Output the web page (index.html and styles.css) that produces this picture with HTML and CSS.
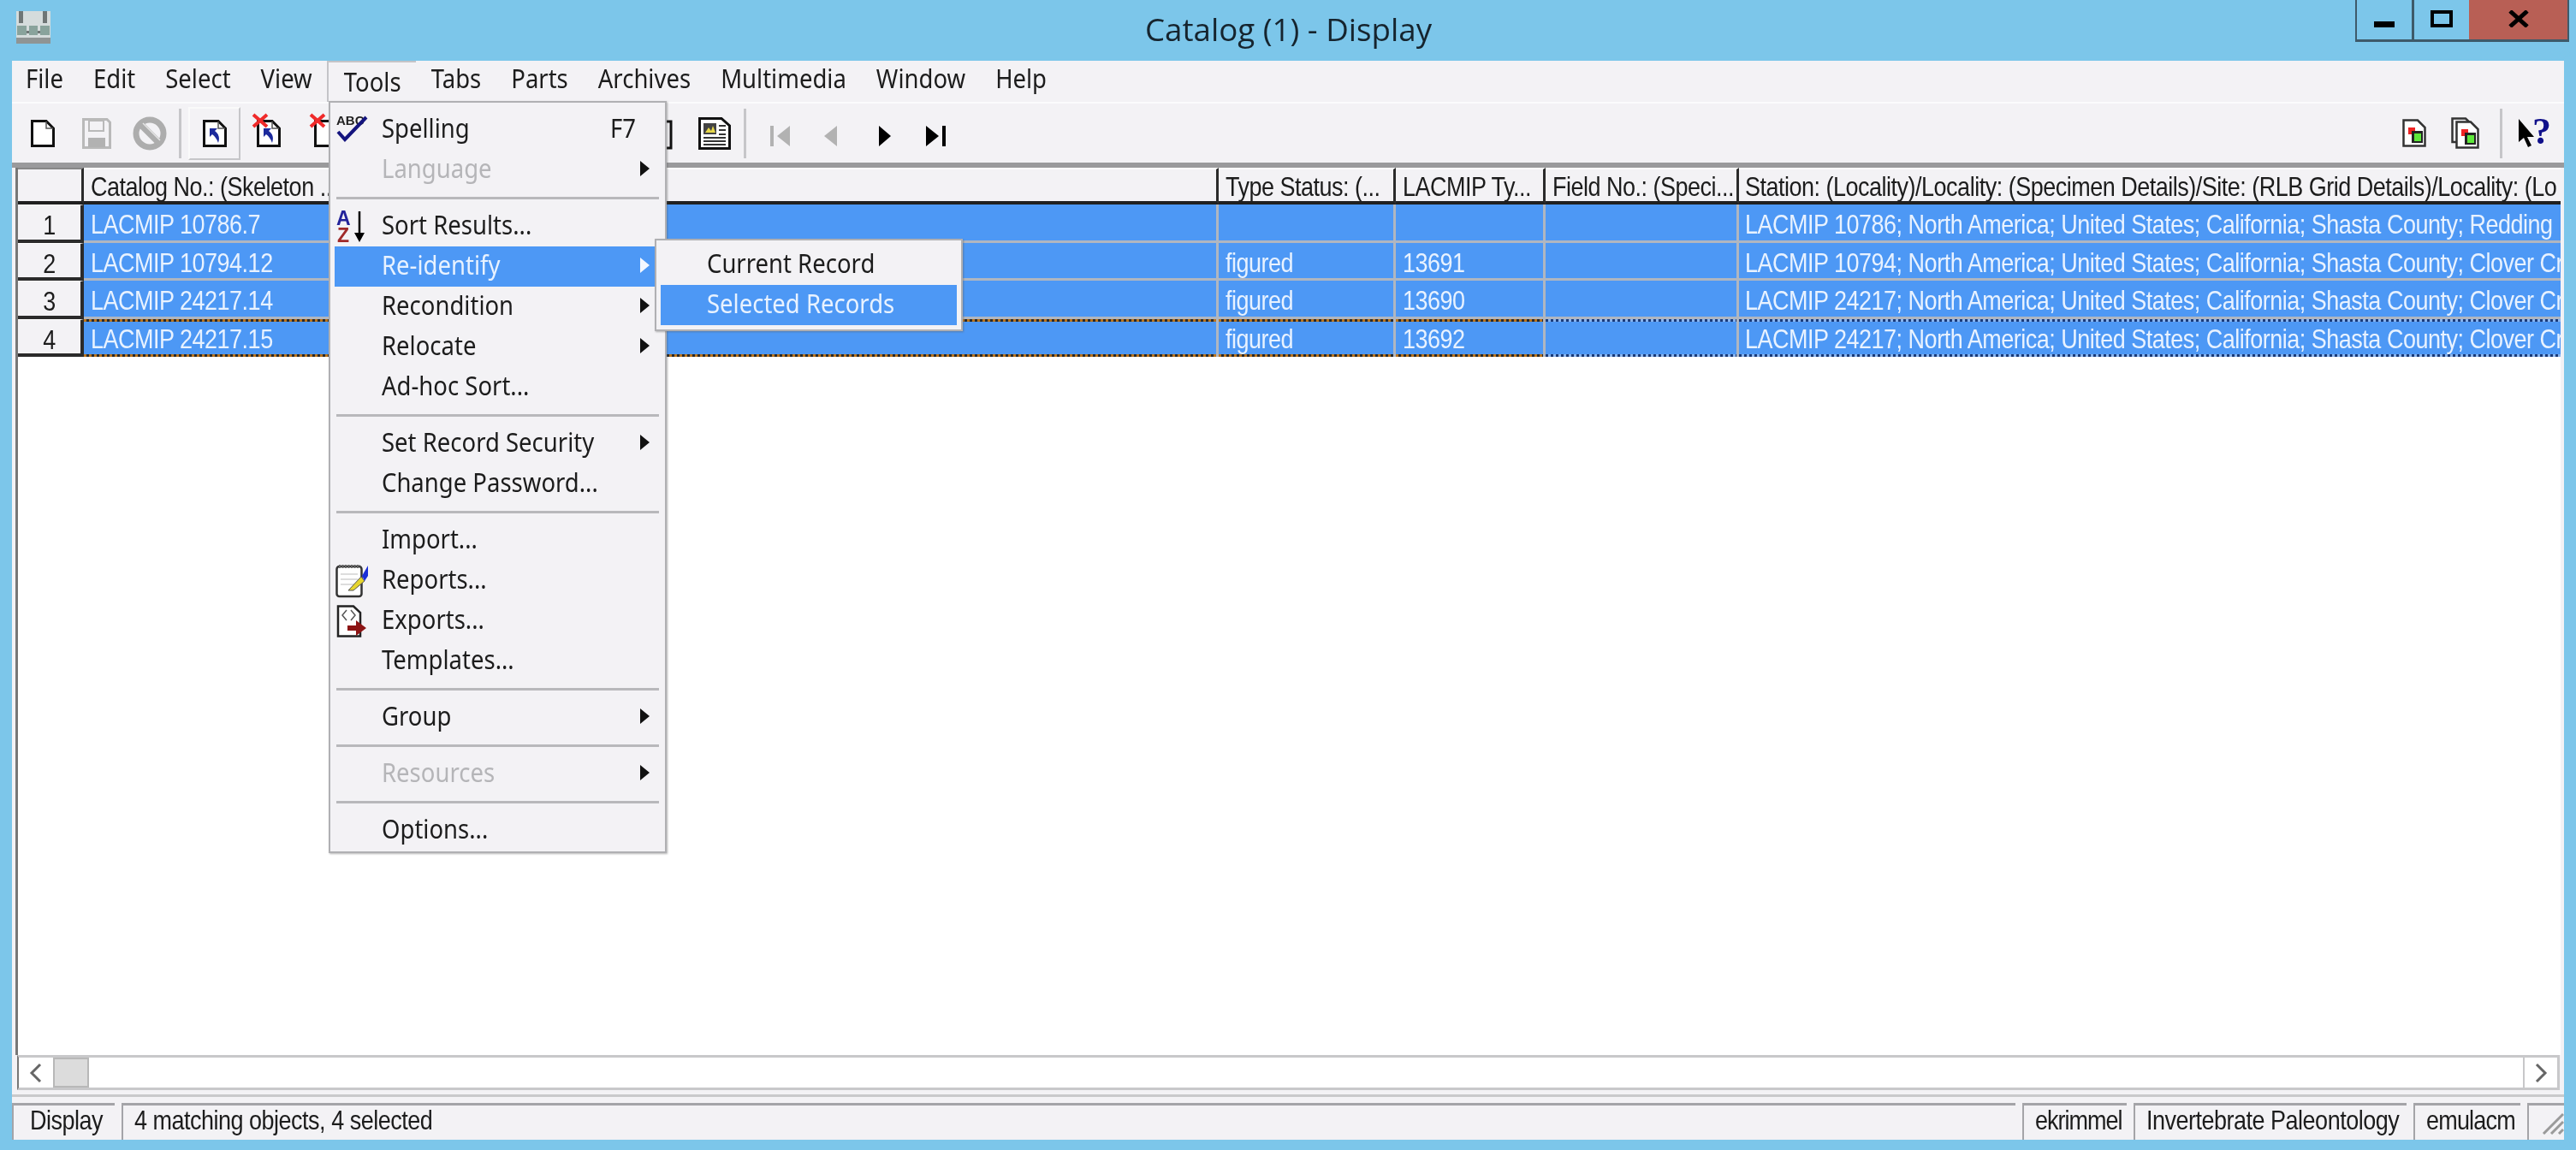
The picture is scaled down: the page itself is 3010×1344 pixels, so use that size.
FILE: index.html
```html
<!DOCTYPE html>
<html lang="en">
<head>
<meta charset="utf-8">
<title>Catalog (1) - Display</title>
<link rel="stylesheet" href="styles.css">
</head>
<body>
<svg class="defs" width="0" height="0">
  <symbol id="doc" viewBox="0 0 28 32"><path d="M1.5 1.5H18L26.5 10V30.500H1.500Z" fill="#fff" stroke="#111" stroke-width="3"/><path d="M18 2V10H26" fill="none" stroke="#555" stroke-width="1.500"/></symbol>
  <symbol id="back" viewBox="0 0 28 32"><path d="M8 10H17L14 13C19 17 20 21 18 27C16 22 14 19 11 17L8 20Z" fill="#1c2a9c"/></symbol>
  <symbol id="cross" viewBox="0 0 20 18"><path d="M2 2L18 16M18 2L2 16" stroke="#f02a2a" stroke-width="4"/></symbol>
  <symbol id="rdoc" viewBox="0 0 28 33"><path d="M1.5 1.500H18L26.500 10V31.500H1.500Z" fill="#fff" stroke="#333" stroke-width="2.500"/><rect x="7" y="10" width="8" height="8" fill="#e22"/><rect x="11" y="14" width="13" height="14" fill="#222"/><rect x="14" y="17" width="8" height="9" fill="#5ee83a"/></symbol>
</svg>
<div class="app">
  <header class="titlebar">
    <div class="tb-left">
      <svg class="app-icon" width="40" height="38" viewBox="0 0 40 38"><rect width="40" height="38" fill="#d5dcdc"/><path d="M3 0H8V14H3ZM31 0H36V14H31Z" fill="#6f7676"/><rect x="8" y="23" width="24" height="3" fill="#6f7676"/><path d="M1 17H12V28H1ZM15 17H25V28H15ZM28 17H39V28H28Z" fill="#89a39c"/><rect y="31" width="40" height="7" fill="#8f9494"/></svg>
    </div>
    <div class="title"><span class="tx">Catalog (1) - Display</span></div>
    <div class="win-btns">
      <div class="wb wb-min"><svg width="24" height="8" viewBox="0 0 24 8"><rect width="24" height="7" fill="#000"/></svg></div>
      <div class="wb wb-max"><svg width="26" height="20" viewBox="0 0 26 20"><rect x="2" y="2" width="22" height="16" fill="none" stroke="#000" stroke-width="4"/></svg></div>
      <div class="wb wb-close"><svg width="24" height="20" viewBox="0 0 24 20"><path d="M2 1L22 19M22 1L2 19" stroke="#000" stroke-width="5"/></svg></div>
    </div>
  </header>

  <main class="client">
    <nav class="menubar">
      <div class="mb-item"><span class="tx">File</span></div>
      <div class="mb-item"><span class="tx">Edit</span></div>
      <div class="mb-item"><span class="tx">Select</span></div>
      <div class="mb-item"><span class="tx">View</span></div>
      <div class="mb-item mb-open"><span class="tx">Tools</span></div>
      <div class="mb-item"><span class="tx">Tabs</span></div>
      <div class="mb-item"><span class="tx">Parts</span></div>
      <div class="mb-item"><span class="tx">Archives</span></div>
      <div class="mb-item"><span class="tx">Multimedia</span></div>
      <div class="mb-item"><span class="tx">Window</span></div>
      <div class="mb-item"><span class="tx">Help</span></div>
    </nav>

    <div class="toolbar">
      <svg class="ti ti-new" width="28" height="32"><use href="#doc"/></svg>
      <svg class="ti ti-save" width="34" height="36" viewBox="0 0 34 36"><path d="M1.500 1.500H29L32.500 5V34.500H1.500Z" fill="#f3f2f5" stroke="#b9b9b9" stroke-width="3"/><rect x="8" y="3" width="17" height="12" fill="none" stroke="#b9b9b9" stroke-width="2"/><rect x="7" y="23" width="20" height="11" fill="#b2b2b2"/></svg>
      <svg class="ti ti-stop" width="40" height="40" viewBox="0 0 40 40"><circle cx="20" cy="20" r="16" fill="none" stroke="#adadad" stroke-width="7"/><path d="M9 9L31 31" stroke="#adadad" stroke-width="8"/><path d="M12 8L32 28" stroke="#e8e8e8" stroke-width="1.500"/></svg>
      <div class="ti-sep"></div>
      <div class="ti-raised">
        <svg class="ti-stack" width="28" height="32"><use href="#doc"/><use href="#back"/></svg>
      </div>
      <div class="ti-x ti-x1">
        <svg width="28" height="32"><use href="#doc"/><use href="#back"/></svg>
        <svg class="ti-cross" width="20" height="18"><use href="#cross"/></svg>
      </div>
      <div class="ti-x ti-x2">
        <svg width="28" height="32"><use href="#doc"/></svg>
        <svg class="ti-cross" width="20" height="18"><use href="#cross"/></svg>
      </div>
      <svg class="ti ti-clip" width="26" height="38" viewBox="0 0 26 38"><rect x="2" y="5" width="22" height="31" fill="#f3f2f5" stroke="#111" stroke-width="3"/><rect x="8" y="1" width="10" height="7" fill="#555"/></svg>
      <svg class="ti ti-news" width="38" height="38" viewBox="0 0 38 38"><path d="M1.500 1.500H27L36.500 10V36.500H1.500Z" fill="#fff" stroke="#111" stroke-width="3"/><rect x="6" y="7" width="15" height="13" fill="#444"/><path d="M8 18L12 12L15 16L17 10L20 18Z" fill="#e8d84a"/><path d="M24 10H32M24 15H32M24 20H32M6 24H32M6 28H32M6 32H32" stroke="#333" stroke-width="2"/></svg>
      <div class="ti-sep ti-sep2"></div>
      <svg class="ti ti-nav ti-first" width="23" height="24" viewBox="0 0 23 24"><rect width="4" height="24" fill="#b2b2b2"/><path d="M23 0V24L8 12Z" fill="#b2b2b2"/></svg>
      <svg class="ti ti-nav ti-prev" width="15" height="24" viewBox="0 0 15 24"><path d="M15 0V24L0 12Z" fill="#b2b2b2"/></svg>
      <svg class="ti ti-nav ti-next" width="14" height="24" viewBox="0 0 14 24"><path d="M0 0V24L14 12Z" fill="#000"/></svg>
      <svg class="ti ti-nav ti-last" width="23" height="24" viewBox="0 0 23 24"><path d="M0 0V24L15 12Z" fill="#000"/><rect x="19" width="4" height="24" fill="#000"/></svg>
      <div class="tb-spacer"></div>
      <svg class="ti" width="28" height="33"><use href="#rdoc"/></svg>
      <svg class="ti ti-rd2" width="33" height="38" viewBox="0 0 33 38"><path d="M1.500 1.500H17L24 8V29H1.500Z" fill="#f3f2f5" stroke="#333" stroke-width="2.500"/><svg x="5" y="4" width="28" height="33"><use href="#rdoc"/></svg></svg>
      <div class="ti-sep ti-sep3"></div>
      <svg class="ti ti-help" width="41" height="36" viewBox="0 0 41 36"><path d="M1 1V28L7 23L12 34L16 32L11 22H19Z" fill="#000"/><text class="help-q" x="17" y="30">?</text></svg>
    </div>

    <section class="grid">
      <div class="row row-head">
        <div class="cell num"></div>
        <div class="cell"><span class="tx">Catalog No.: (Skeleton ...</span></div>
        <div class="cell"><span class="tx">Type Status: (...</span></div>
        <div class="cell"><span class="tx">LACMIP Ty...</span></div>
        <div class="cell"><span class="tx">Field No.: (Speci...</span></div>
        <div class="cell"><span class="tx">Station: (Locality)/Locality: (Specimen Details)/Site: (RLB Grid Details)/Locality: (Lo</span></div>
      </div>
      <div class="row">
        <div class="cell num"><span class="tx">1</span></div>
        <div class="cell"><span class="tx">LACMIP 10786.7</span></div>
        <div class="cell"></div>
        <div class="cell"></div>
        <div class="cell"></div>
        <div class="cell"><span class="tx">LACMIP 10786; North America; United States; California; Shasta County; Redding</span></div>
      </div>
      <div class="row">
        <div class="cell num"><span class="tx">2</span></div>
        <div class="cell"><span class="tx">LACMIP 10794.12</span></div>
        <div class="cell"><span class="tx">figured</span></div>
        <div class="cell"><span class="tx">13691</span></div>
        <div class="cell"></div>
        <div class="cell"><span class="tx">LACMIP 10794; North America; United States; California; Shasta County; Clover Cr</span></div>
      </div>
      <div class="row">
        <div class="cell num"><span class="tx">3</span></div>
        <div class="cell"><span class="tx">LACMIP 24217.14</span></div>
        <div class="cell"><span class="tx">figured</span></div>
        <div class="cell"><span class="tx">13690</span></div>
        <div class="cell"></div>
        <div class="cell"><span class="tx">LACMIP 24217; North America; United States; California; Shasta County; Clover Cr</span></div>
      </div>
      <div class="row row-focus">
        <div class="cell num"><span class="tx">4</span></div>
        <div class="cell"><span class="tx">LACMIP 24217.15</span></div>
        <div class="cell"><span class="tx">figured</span></div>
        <div class="cell"><span class="tx">13692</span></div>
        <div class="cell cell-dot"></div>
        <div class="cell cell-dot"><span class="tx">LACMIP 24217; North America; United States; California; Shasta County; Clover Cr</span></div>
      </div>
    </section>

    <div class="hscroll">
      <div class="sb-btn"><svg width="16" height="24" viewBox="0 0 16 24"><path d="M13 2L3 12L13 22" fill="none" stroke="#666" stroke-width="3"/></svg></div>
      <div class="sb-thumb"></div>
      <div class="sb-track"></div>
      <div class="sb-btn sb-right"><svg width="16" height="24" viewBox="0 0 16 24"><path d="M3 2L13 12L3 22" fill="none" stroke="#666" stroke-width="3"/></svg></div>
    </div>

    <footer class="status">
      <div class="pane pane-display"><span class="tx">Display</span></div>
      <div class="pane pane-msg"><span class="tx">4 matching objects, 4 selected</span></div>
      <div class="pane pane-user"><span class="tx">ekrimmel</span></div>
      <div class="pane pane-dept"><span class="tx">Invertebrate Paleontology</span></div>
      <div class="pane pane-host"><span class="tx">emulacm</span></div>
      <div class="pane pane-grip"><svg width="28" height="28" viewBox="0 0 28 28"><path d="M4 27L27 4M13 27L27 13M22 27L27 22" stroke="#9a9a9a" stroke-width="3"/></svg></div>
    </footer>
  </main>

  <div class="menu menu-tools">
    <div class="mi">
      <span class="mi-icon"><svg width="40" height="38" viewBox="0 0 40 38"><text class="abc" x="1" y="13">ABC</text><path d="M3 21L11 30L36 4" fill="none" stroke="#14147e" stroke-width="4"/></svg></span>
      <span class="mi-label"><span class="tx">Spelling</span></span><span class="mi-key"><span class="tx">F7</span></span>
    </div>
    <div class="mi mi-off"><span class="mi-icon"></span><span class="mi-label"><span class="tx">Language</span></span><span class="arrow"></span></div>
    <div class="msep"></div>
    <div class="mi">
      <span class="mi-icon"><svg width="40" height="38" viewBox="0 0 40 38"><text class="az az-a" x="1" y="17">A</text><text class="az az-z" x="2" y="37">Z</text><path d="M28 1V30" stroke="#000" stroke-width="2.500"/><path d="M22 26H34L28 37Z" fill="#000"/></svg></span>
      <span class="mi-label"><span class="tx">Sort Results...</span></span>
    </div>
    <div class="mi mi-on"><span class="mi-icon"></span><span class="mi-label"><span class="tx">Re-identify</span></span><span class="arrow"></span></div>
    <div class="mi"><span class="mi-icon"></span><span class="mi-label"><span class="tx">Recondition</span></span><span class="arrow"></span></div>
    <div class="mi"><span class="mi-icon"></span><span class="mi-label"><span class="tx">Relocate</span></span><span class="arrow"></span></div>
    <div class="mi"><span class="mi-icon"></span><span class="mi-label"><span class="tx">Ad-hoc Sort...</span></span></div>
    <div class="msep"></div>
    <div class="mi"><span class="mi-icon"></span><span class="mi-label"><span class="tx">Set Record Security</span></span><span class="arrow"></span></div>
    <div class="mi"><span class="mi-icon"></span><span class="mi-label"><span class="tx">Change Password...</span></span></div>
    <div class="msep"></div>
    <div class="mi"><span class="mi-icon"></span><span class="mi-label"><span class="tx">Import...</span></span></div>
    <div class="mi">
      <span class="mi-icon"><svg width="40" height="40" viewBox="0 0 40 40"><rect x="1.500" y="3" width="29" height="35" rx="3" fill="#fff" stroke="#333" stroke-width="2.500"/><path d="M4 3H29" stroke="#666" stroke-width="4" stroke-dasharray="2 1.500"/><path d="M6 12H26M6 18H26M6 24H22" stroke="#ddd" stroke-width="2"/><path d="M15 31L30 15L34 20L21 31Z" fill="#e6d52e" stroke="#555" stroke-width="1"/><path d="M31 14L38 2V14L34 20Z" fill="#1a2fd8"/></svg></span>
      <span class="mi-label"><span class="tx">Reports...</span></span>
    </div>
    <div class="mi">
      <span class="mi-icon"><svg width="40" height="38" viewBox="0 0 40 38"><path d="M3 1.500H21L29 9V36.500H3Z" fill="#fff" stroke="#222" stroke-width="2.500"/><path d="M13 6L8 12L13 18M18 6L23 12L18 18" fill="none" stroke="#555" stroke-width="1.500"/><path d="M14 24H24V18L36 27L24 36V30H14Z" fill="#8c1414"/></svg></span>
      <span class="mi-label"><span class="tx">Exports...</span></span>
    </div>
    <div class="mi"><span class="mi-icon"></span><span class="mi-label"><span class="tx">Templates...</span></span></div>
    <div class="msep"></div>
    <div class="mi"><span class="mi-icon"></span><span class="mi-label"><span class="tx">Group</span></span><span class="arrow"></span></div>
    <div class="msep"></div>
    <div class="mi mi-off"><span class="mi-icon"></span><span class="mi-label"><span class="tx">Resources</span></span><span class="arrow"></span></div>
    <div class="msep"></div>
    <div class="mi"><span class="mi-icon"></span><span class="mi-label"><span class="tx">Options...</span></span></div>
  </div>

  <div class="menu menu-sub">
    <div class="mi mi-sub"><span class="mi-label"><span class="tx">Current Record</span></span></div>
    <div class="mi mi-sub mi-on"><span class="mi-label"><span class="tx">Selected Records</span></span></div>
  </div>
</div>
</body>
</html>
```

FILE: styles.css
```css
* { box-sizing: border-box; }
html, body { margin: 0; padding: 0; }
body { width: 3010px; height: 1344px; overflow: hidden; background: #7cc6ea; }
.defs { position: absolute; }

.app {
  position: relative;
  width: 3010px;
  height: 1344px;
  display: flex;
  flex-direction: column;
  background: #7cc6ea;
  font-family: "Liberation Sans", Arial, sans-serif;
  font-size: 27px;
  color: #1c1c1c;
  filter: blur(0.7px);
}
.tx { display: inline-block; white-space: nowrap; transform: scaleY(1.15); letter-spacing: -0.5px; }

/* title bar */
.titlebar { flex: 0 0 71px; display: grid; grid-template-columns: 1fr auto 1fr; padding: 0 8px 0 9px; }
.tb-left { padding: 13px 0 0 10px; }
.app-icon { display: block; }
.title { padding-top: 11px; font-family: "Open Sans", sans-serif; font-size: 36.700px; line-height: 46px; color: #16242e; }
.title .tx { transform: none; letter-spacing: 0; }
.win-btns { justify-self: end; display: flex; height: 49px; border: solid #3e5a6a; border-width: 0 2px 3px 2px; }
.wb { display: flex; justify-content: center; }
.wb-min { width: 67px; border-right: 3px solid #3e5a6a; padding-top: 25px; }
.wb-max { width: 64px; padding-top: 12px; }
.wb-close { width: 115px; background: #b85f55; padding-top: 12px; }

/* client */
.client { flex: 1; margin: 0 14px 12px; display: flex; flex-direction: column; background: #f3f2f5; min-height: 0; }
.menubar { flex: 0 0 50px; display: flex; border-bottom: 2px solid #fbfbfc; font-family: "Noto Sans", sans-serif; font-size: 27.500px; }
.menubar .tx, .menu .tx { letter-spacing: 0; }
.mb-item { height: 48px; padding: 4px 17.500px 0; line-height: 34px; }
.mb-item:first-child { padding-left: 16px; }
.mb-open { height: 48px; padding-top: 6px; border-left: 2px solid #c4c4c8; border-top: 2px solid #c4c4c8; }

.toolbar { flex: 0 0 75px; display: flex; align-items: center; padding: 0 13px 0 22px; border-bottom: 6px solid #9a9a9c; }
.ti { display: block; flex: none; }
.ti-save { margin-left: 32px; }
.ti-stop { margin-left: 25px; }
.ti-sep { flex: none; width: 3px; height: 58px; background: #c6c6c9; margin-left: 14px; }
.ti-raised { flex: none; width: 61px; height: 62px; margin-left: 8px; display: flex; align-items: center; justify-content: center; border: 2px solid #c6c6c9; border-left-color: #fafafa; border-top-color: #fafafa; }
.ti-stack { display: block; }
.ti-x { flex: none; position: relative; width: 28px; height: 32px; }
.ti-x svg { display: block; }
.ti-x .ti-cross { position: absolute; left: -6px; top: -8px; }
.ti-x1 { margin-left: 19px; }
.ti-x2 { margin-left: 39px; }
.ti-clip { margin-left: 365px; }
.ti-news { margin-left: 30px; }
.ti-sep2 { margin-left: 15px; }
.ti-nav { margin-top: 6px; }
.ti-first { margin-left: 28px; }
.ti-prev { margin-left: 40px; }
.ti-next { margin-left: 49px; }
.ti-last { margin-left: 41px; }
.tb-spacer { flex: 1; }
.ti-rd2 { margin-left: 29px; }
.ti-sep3 { margin-left: 24px; }
.ti-help { margin-left: 18px; overflow: visible; }
.help-q { font-family: "Liberation Serif", serif; font-weight: 700; font-size: 44px; fill: #10108a; }

/* grid */
.grid { flex: 1; margin: 0 4px; background: #fff; border-left: 3px solid #777; min-height: 0; overflow: hidden; }
.row { display: grid; grid-template-columns: 77px 1326px 207px 175px 226px 1fr; height: 44.500px; background: #4d98f5; color: #e8f2ff; }
.cell { overflow: hidden; white-space: nowrap; padding: 7px 0 0 8px; line-height: 34px; border-right: 3px solid #b0b6c0; border-bottom: 3px solid #b0b6c0; }
.cell:last-child { border-right: 0; padding-left: 7px; }
.num { background: #f3f2f5; color: #1c1c1c; text-align: center; padding-left: 0; border-right: 4px solid #2b2b2b; border-bottom: 4px solid #2b2b2b; border-top: 1px solid #fff; }
.row-head { height: 43px; background: #f3f2f5; color: #1c1c1c; }
.row-head .cell { border-right: 3px solid #2b2b2b; border-bottom: 4px solid #202020; padding-top: 4px; border-top: 2px solid #fff; }
.row-head .cell:last-child { border-right: 0; }
.row-head .num { border-top: 2px solid #888; }
.row-focus { height: 44px; }
.row-focus .cell:not(.num) {
  border-bottom: 0;
  padding-top: 7px;
  background-image: repeating-linear-gradient(90deg, #b9731c 0 3px, #2a2a2a 3px 6px), repeating-linear-gradient(90deg, #b9731c 0 3px, #2a2a2a 3px 6px);
  background-size: 100% 3px, 100% 3px;
  background-position: 0 0, 0 100%;
  background-repeat: no-repeat;
}
.row-focus .cell-dot:not(.num) {
  background-image: repeating-linear-gradient(90deg, #1a3a78 0 3px, #89b4ee 3px 6px), repeating-linear-gradient(90deg, #1a3a78 0 3px, #89b4ee 3px 6px);
}

/* horizontal scrollbar */
.hscroll { flex: 0 0 41px; display: flex; margin: 0 5px 0 6px; background: #fff; border: solid #c8c8ca; border-width: 3px 3px 3px 2px; border-left-color: #777; }
.sb-btn { flex: 0 0 40px; display: flex; align-items: center; justify-content: center; }
.sb-thumb { flex: 0 0 42px; background: #dcdcdc; border: 2px solid #b8b8b8; }
.sb-track { flex: 1; }
.sb-right { border-left: 2px solid #c8c8ca; }

/* status bar */
.status { flex: 0 0 53px; display: flex; gap: 8px; padding-top: 7px; border-top: 3px solid #c9c9cb; margin-top: 5px; }
.pane { border: solid #a4a4a8; border-width: 3px 0 0 2px; line-height: 36px; white-space: nowrap; overflow: hidden; padding-left: 13px; }
.pane-display { flex: 0 0 120px; padding-left: 19px; }
.pane-msg { flex: 1; }
.pane-user { flex: 0 0 122px; }
.pane-user .tx { letter-spacing: -1px; }
.pane-dept { flex: 0 0 319px; }
.pane-host { flex: 0 0 125px; }
.pane-host .tx { letter-spacing: -0.8px; }
.pane-grip { flex: 0 0 43px; padding: 6px 0 0 13px; }
.pane-grip svg { display: block; }

/* menus */
.menu { position: absolute; background: #f3f2f5; border: 2px solid #b0b0b3; box-shadow: 1px 1px 2px rgba(90,90,90,.45); padding: 8px 5px 0; font-family: "Noto Sans", sans-serif; font-size: 27.500px; }
.menu-tools { left: 384px; top: 118px; width: 395px; height: 879px; }
.menu-sub { left: 765px; top: 279px; width: 360px; height: 108px; padding: 5px 5px 0; }
.mi { display: flex; align-items: center; height: 47px; }
.mi-icon { flex: 0 0 55px; display: flex; align-items: center; padding-left: 1px; height: 47px; }
.mi-icon svg { display: block; flex: none; }
.mi-label { flex: 1; padding-bottom: 6px; }
.mi-key { flex: none; margin-right: 29px; padding-bottom: 6px; }
.mi-off { color: #b5b5b8; }
.mi-on { background: #4d98f5; color: #e8f2ff; }
.mi-sub { padding-left: 54px; }
.arrow { flex: none; width: 0; height: 0; margin: -4px 13px 0 0; border-left: 11px solid #111; border-top: 9px solid transparent; border-bottom: 9px solid transparent; }
.mi-on .arrow { border-left-color: #f4f8ff; }
.msep { height: 3px; margin: 8px 2px; background: #b8b8bb; }
.abc { font-family: "Liberation Sans", sans-serif; font-weight: 700; font-size: 15px; fill: #222; }
.az { font-family: "Liberation Sans", sans-serif; font-weight: 700; font-size: 23px; }
.az-a { fill: #23239a; }
.az-z { fill: #a02a2a; }
```
